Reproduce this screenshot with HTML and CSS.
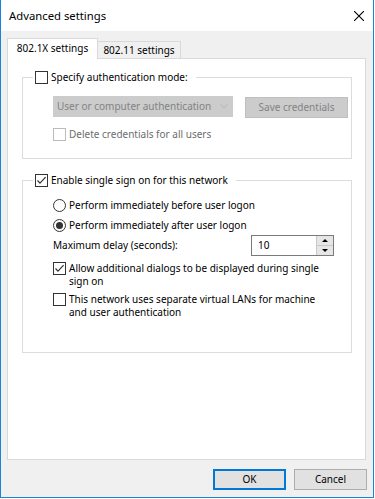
FILE: index.html
```html
<!DOCTYPE html>
<html lang="en">

<head>
    <meta charset="UTF-8">
    <meta name="viewport" content="width=device-width, initial-scale=1.0">
    <title>Advanced settings</title>
    <link rel="stylesheet" href="styles.css">
</head>

<body>
    <div class="window">
        <div class="titlebar">
            <span class="title">Advanced settings</span>
            <svg class="close" width="10" height="10" viewBox="0 0 10 10">
                <path d="M0 0L10 10M10 0L0 10" stroke="#000" stroke-width="1.1" fill="none" />
            </svg>
        </div>

        <div class="body">
            <div class="tabs">
                <div class="tab active">802.1X settings</div>
                <div class="tab inactive">802.11 settings</div>
            </div>

            <div class="panel">
                <fieldset class="group group-auth">
                    <legend>
                        <label class="check"><span class="box"></span>Specify authentication mode:</label>
                    </legend>
                    <div class="group-body">
                        <div class="controls">
                            <div class="select disabled">
                                <span>User or computer authentication</span>
                                <svg width="8" height="5" viewBox="0 0 8 5">
                                    <path d="M0.5 0.5L4 4L7.5 0.5" stroke="#b4b4b4" stroke-width="1" fill="none" />
                                </svg>
                            </div>
                            <div class="btn disabled save">Save credentials</div>
                        </div>
                        <label class="check option disabled delete"><span class="box"></span>Delete credentials for all users</label>
                    </div>
                </fieldset>

                <fieldset class="group group-sso">
                    <legend>
                        <label class="check"><span class="box"><svg width="11" height="11" viewBox="0 0 11 11">
                                    <path d="M1.5 5.5L4 8.2L9.6 2.2" stroke="#333" stroke-width="1.2" fill="none" />
                                </svg></span>Enable single sign on for this network</label>
                    </legend>
                    <div class="group-body">
                        <label class="check option first"><span class="radio"></span>Perform immediately before user logon</label>
                        <label class="check option second"><span class="radio on"></span>Perform immediately after user logon</label>
                        <div class="delay">
                            <span>Maximum delay (seconds):</span>
                            <div class="spin">
                                <span class="spin-value">10</span>
                                <div class="spin-arrows">
                                    <span class="arrow up"></span>
                                    <span class="arrow down"></span>
                                </div>
                            </div>
                        </div>
                        <label class="check option multi allow"><span class="box"><svg width="11" height="11" viewBox="0 0 11 11">
                                    <path d="M1.5 5.5L4 8.2L9.6 2.2" stroke="#333" stroke-width="1.2" fill="none" />
                                </svg></span><span>Allow additional dialogs to be displayed during single sign on</span></label>
                        <label class="check option multi vlan"><span class="box"></span><span>This network uses separate virtual LANs for machine and user authentication</span></label>
                    </div>
                </fieldset>
            </div>

            <div class="actions">
                <button class="btn default">OK</button>
                <button class="btn">Cancel</button>
            </div>
        </div>
    </div>
</body>

</html>
```

FILE: styles.css
```css
html,
body {
    margin: 0;
    background: #fff;
}

body {
    font-family: 'Noto Sans', 'Segoe UI', sans-serif;
    font-size: 10px;
    line-height: 13px;
    color: #000;
}

.window {
    width: 374px;
    height: 498px;
    box-sizing: border-box;
    border: 1px solid #1883d7;
    border-top: none;
    display: flex;
    flex-direction: column;
}

.titlebar {
    height: 31px;
    flex: none;
    display: flex;
    align-items: center;
    justify-content: space-between;
    padding: 0 9px 0 8px;
    background: #fff;
}

.title {
    font-size: 11.3px;
}

.body {
    flex: 1;
    display: flex;
    flex-direction: column;
    padding: 7px 7px 7px 6px;
    background: #f0f0f0;
}

/* tabs */

.tabs {
    display: flex;
    align-items: flex-end;
    height: 20px;
    flex: none;
}

.tab {
    box-sizing: border-box;
    text-align: center;
    border: 1px solid #d9d9d9;
    border-bottom: none;
}

.tab.active {
    width: 91px;
    height: 21px;
    padding-top: 3px;
    margin-bottom: -1px;
    background: #fff;
    position: relative;
    z-index: 1;
}

.tab.inactive {
    width: 83px;
    height: 17px;
    padding-top: 2px;
    border-left: none;
    background: #f0f0f0;
}

.panel {
    flex: 1;
    background: #fff;
    border: 1px solid #d9d9d9;
    padding: 12px 13px 0 14px;
}

/* group boxes */

.group {
    margin: 0;
    min-width: 0;
    border: 1px solid #dcdcdc;
}

.group-auth {
    padding: 0 3px 17px 10px;
}

.group-sso {
    margin-top: 15px;
    padding: 0 17px 33px 10px;
}

.group legend {
    padding: 0 8px 0 2px;
}

.group-body {
    margin: 12px 0 0 20px;
}

.check {
    display: flex;
    align-items: center;
    gap: 3px;
}

.check.multi {
    align-items: flex-start;
}

.box {
    width: 13px;
    height: 13px;
    flex: none;
    box-sizing: border-box;
    border: 1px solid #333;
    background: #fff;
}

.box svg {
    display: block;
}

.radio {
    width: 13px;
    height: 13px;
    flex: none;
    box-sizing: border-box;
    border: 1px solid #333;
    border-radius: 50%;
    display: flex;
    align-items: center;
    justify-content: center;
}

.radio.on::after {
    content: "";
    width: 7px;
    height: 7px;
    border-radius: 50%;
    background: #333;
}

.check.disabled {
    color: #6d6d6d;
}

.check.disabled .box {
    border-color: #bcbcbc;
}

.controls {
    display: flex;
    align-items: flex-start;
    gap: 12px;
}

.select {
    width: 180px;
    height: 21px;
    box-sizing: border-box;
    display: flex;
    align-items: center;
    justify-content: space-between;
    padding: 0 5px 0 4px;
    background: #cccccc;
    color: #838383;
}

.select svg {
    display: block;
}

.delete {
    margin-top: 10px;
}

.option.second {
    margin-top: 7px;
}

.delay {
    margin-top: 3px;
    display: flex;
    align-items: center;
    justify-content: space-between;
}

.spin {
    width: 83px;
    height: 21px;
    box-sizing: border-box;
    border: 1px solid #7a7a7a;
    background: #fff;
    display: flex;
}

.spin-value {
    flex: 1;
    padding-left: 6px;
    align-self: center;
}

.spin-arrows {
    width: 16px;
    display: flex;
    flex-direction: column;
    border-left: 1px solid #c8c8c8;
}

.arrow {
    flex: 1;
    display: flex;
    align-items: center;
    justify-content: center;
    background: #e6e6e6;
}

.arrow.up {
    border-bottom: 1px solid #c8c8c8;
}

.arrow::after {
    content: "";
    border-left: 3px solid transparent;
    border-right: 3px solid transparent;
}

.arrow.up::after {
    border-bottom: 3px solid #000;
}

.arrow.down::after {
    border-top: 3px solid #000;
}

.allow {
    margin-top: 6px;
}

.vlan {
    margin-top: 5px;
}

/* buttons */

.btn {
    width: 73px;
    height: 21px;
    box-sizing: border-box;
    padding: 0;
    font: inherit;
    color: #000;
    background: #e1e1e1;
    border: 1px solid #adadad;
    display: flex;
    align-items: center;
    justify-content: center;
}

.btn.save {
    width: 103px;
    margin-top: 1px;
    background: #cccccc;
    border-color: #bfbfbf;
    color: #838383;
}

.btn.default {
    border: 2px solid #0078d7;
}

.actions {
    flex: none;
    display: flex;
    justify-content: flex-end;
    gap: 8px;
    margin: 9px -1px 0 0;
}
```
